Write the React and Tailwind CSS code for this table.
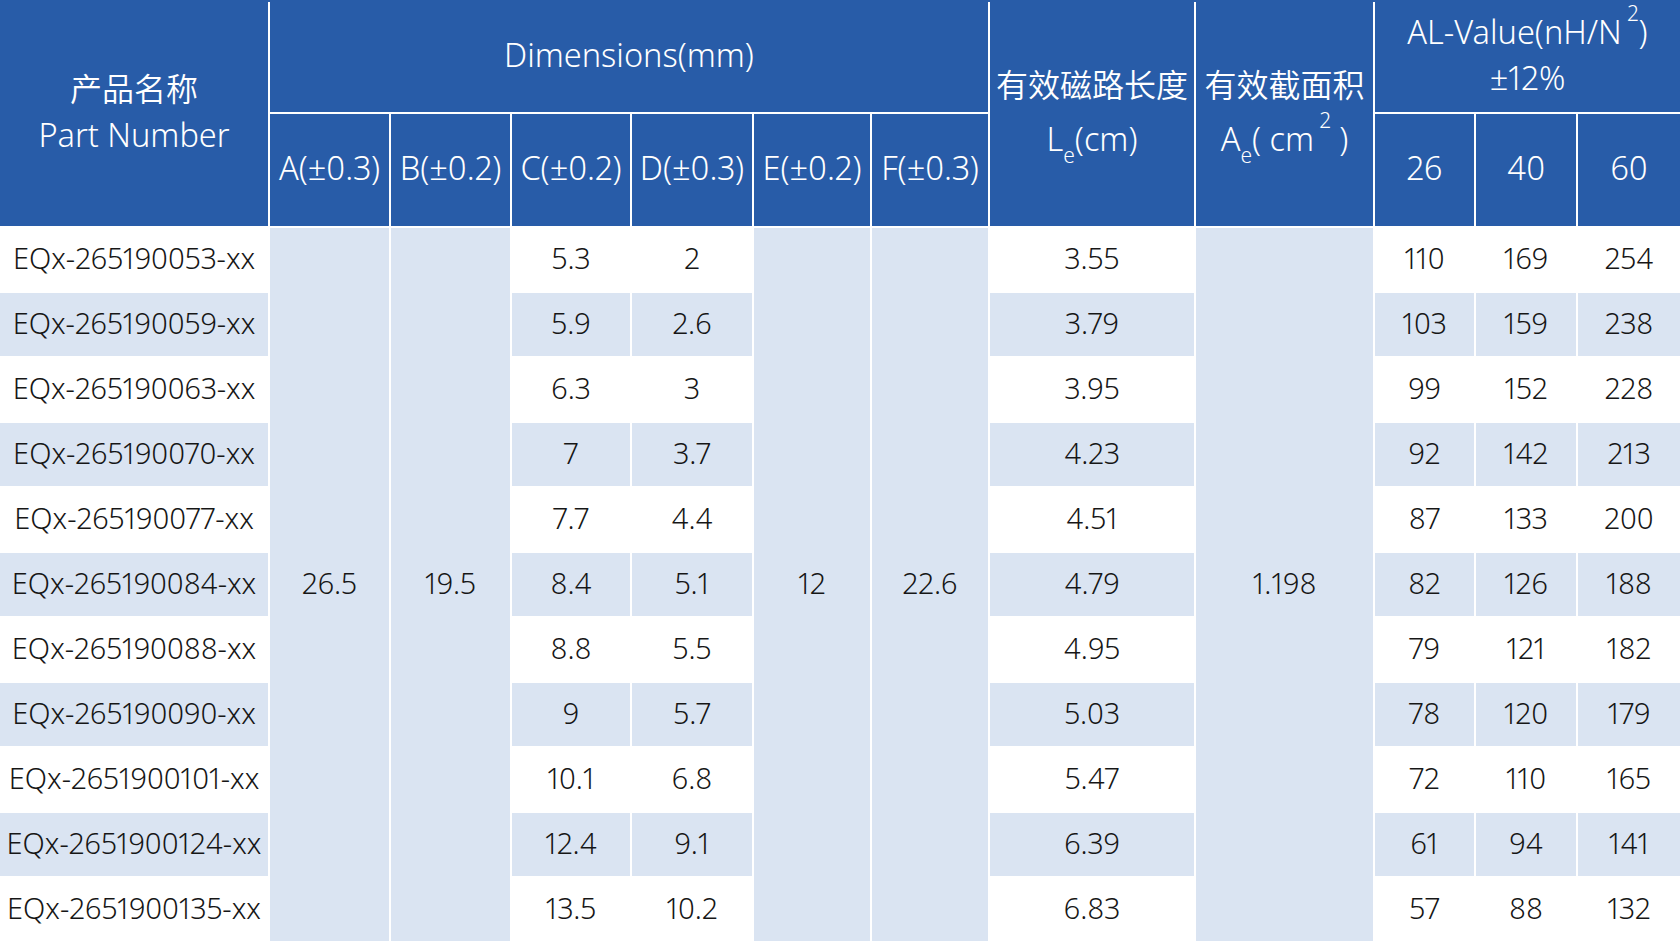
import React from "react";

const rows = [
  ["EQx-265190053-xx", "5.3", "2", "3.55", "110", "169", "254"],
  ["EQx-265190059-xx", "5.9", "2.6", "3.79", "103", "159", "238"],
  ["EQx-265190063-xx", "6.3", "3", "3.95", "99", "152", "228"],
  ["EQx-265190070-xx", "7", "3.7", "4.23", "92", "142", "213"],
  ["EQx-265190077-xx", "7.7", "4.4", "4.51", "87", "133", "200"],
  ["EQx-265190084-xx", "8.4", "5.1", "4.79", "82", "126", "188"],
  ["EQx-265190088-xx", "8.8", "5.5", "4.95", "79", "121", "182"],
  ["EQx-265190090-xx", "9", "5.7", "5.03", "78", "120", "179"],
  ["EQx-2651900101-xx", "10.1", "6.8", "5.47", "72", "110", "165"],
  ["EQx-2651900124-xx", "12.4", "9.1", "6.39", "61", "94", "141"],
  ["EQx-2651900135-xx", "13.5", "10.2", "6.83", "57", "88", "132"],
];

const H = "bg-[#285ca8] text-white flex flex-col items-center justify-center text-center text-[32.5px] leading-[46px] whitespace-nowrap pb-[4px]";
const M = "bg-[#dae4f2] row-span-11 flex items-center justify-center text-[29px] pb-[3px]";

function Cell({ children, odd }) {
  return (
    <div className={(odd ? "bg-[#dae4f2]" : "bg-white") + " flex items-center justify-center text-[29px] whitespace-nowrap pb-[3px]"}>
      {children}
    </div>
  );
}

export default function App() {
  return (
    <div className="w-[1680px] h-[941px] bg-white overflow-hidden font-['Noto_Sans','Noto_Sans_CJK_SC',sans-serif] font-[350] text-[#161616] proportional-nums">
      <div className="h-[2px] bg-[#285ca8]" />
      <div className="grid gap-[2px] grid-cols-[268px_119px_119px_118px_120px_116px_116px_204px_177px_99px_100px_102px] grid-rows-[110px_112px_repeat(11,63px)]">
        <div className={H + " row-span-2 pb-0"}>
          <div className="text-[32px]">产品名称</div>
          <div>Part Number</div>
        </div>
        <div className={H + " col-span-6"}>Dimensions(mm)</div>
        <div className={H + " row-span-2 leading-[54px] pb-0"}>
          <div className="text-[32px]">有效磁路长度</div>
          <div>
            L<sub className="text-[21px] align-[-7px]">e</sub>(cm)
          </div>
        </div>
        <div className={H + " row-span-2 leading-[54px] pb-0"}>
          <div className="text-[32px]">有效截面积</div>
          <div>
            A<sub className="text-[21px] align-[-7px]">e</sub>( cm<sup className="text-[21px] align-[13px]"> 2</sup> )
          </div>
        </div>
        <div className={H + " col-span-3 leading-[42px]"}>
          <div>
            AL-Value(nH/N<sup className="text-[21px] align-[13px]"> 2</sup>)
          </div>
          <div>±12%</div>
        </div>
        <div className={H}>A(±0.3)</div>
        <div className={H}>B(±0.2)</div>
        <div className={H}>C(±0.2)</div>
        <div className={H}>D(±0.3)</div>
        <div className={H}>E(±0.2)</div>
        <div className={H}>F(±0.3)</div>
        <div className={H}>26</div>
        <div className={H}>40</div>
        <div className={H}>60</div>

        {rows.map((r, i) => {
          const odd = i % 2 === 1;
          if (i === 0) {
            return (
              <React.Fragment key={i}>
                <Cell odd={odd}>{r[0]}</Cell>
                <div className={M}>26.5</div>
                <div className={M}>19.5</div>
                <Cell odd={odd}>{r[1]}</Cell>
                <Cell odd={odd}>{r[2]}</Cell>
                <div className={M}>12</div>
                <div className={M}>22.6</div>
                <Cell odd={odd}>{r[3]}</Cell>
                <div className={M}>1.198</div>
                <Cell odd={odd}>{r[4]}</Cell>
                <Cell odd={odd}>{r[5]}</Cell>
                <Cell odd={odd}>{r[6]}</Cell>
              </React.Fragment>
            );
          }
          return (
            <React.Fragment key={i}>
              <Cell odd={odd}>{r[0]}</Cell>
              <Cell odd={odd}>{r[1]}</Cell>
              <Cell odd={odd}>{r[2]}</Cell>
              <Cell odd={odd}>{r[3]}</Cell>
              <Cell odd={odd}>{r[4]}</Cell>
              <Cell odd={odd}>{r[5]}</Cell>
              <Cell odd={odd}>{r[6]}</Cell>
            </React.Fragment>
          );
        })}
      </div>
    </div>
  );
}
